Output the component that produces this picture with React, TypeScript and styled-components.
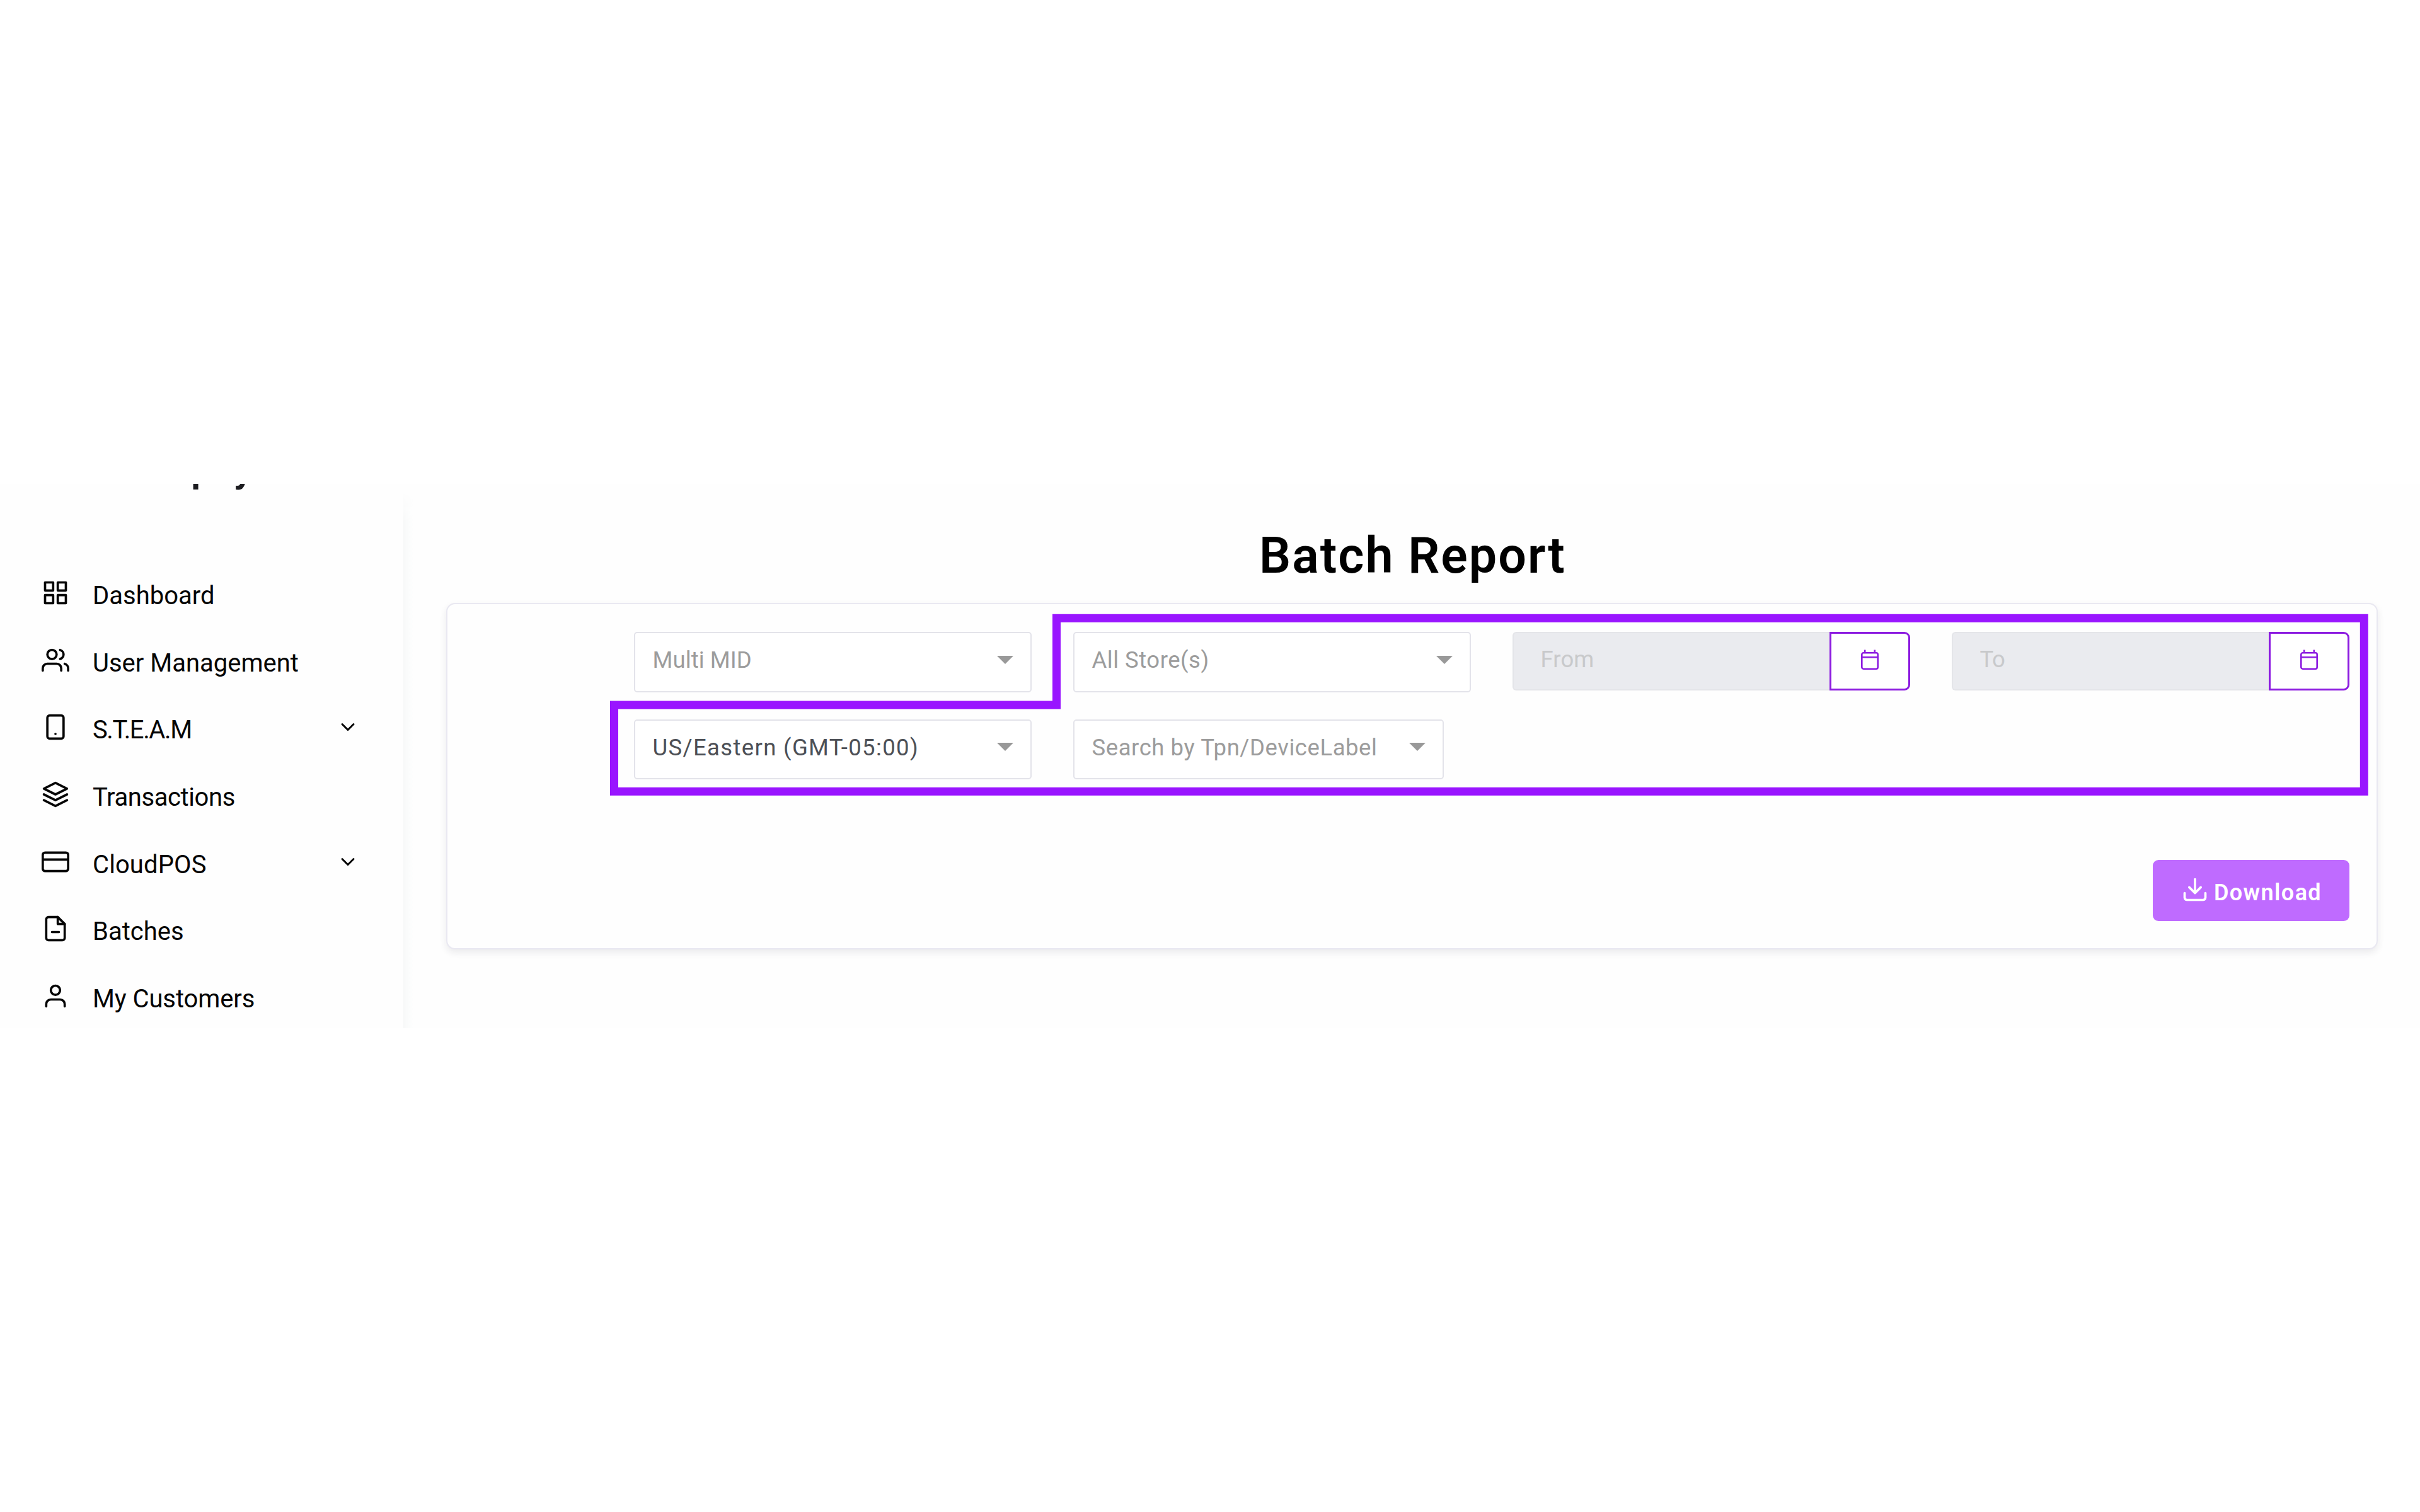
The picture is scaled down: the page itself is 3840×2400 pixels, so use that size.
import React from "react";
import styled, { createGlobalStyle } from "styled-components";
import {
  FiChevronDown,
  FiCreditCard,
  FiDownload,
  FiFileMinus,
  FiGrid,
  FiLayers,
  FiSmartphone,
  FiUser,
  FiUsers,
} from "react-icons/fi";
import type { IconType } from "react-icons";

const GlobalStyle = createGlobalStyle`
  * { box-sizing: border-box; }
  body { margin: 0; background: #fff; font-family: Roboto, "Liberation Sans", sans-serif; }
`;

const Page = styled.div`
  height: 2400px;
  padding: 768px 0;
  background: #fff;
`;

const Shell = styled.div`
  display: flex;
  height: 864px;
  overflow: hidden;
  background: #fefefe;
`;

const Sidebar = styled.aside`
  flex: none;
  width: 640px;
`;

const Brand = styled.div`
  height: 120px;
  padding-left: 303px;
  overflow: hidden;
  color: #1c1c20;
  font-size: 62px;
  font-weight: 600;
  line-height: 72px;
`;

const BrandName = styled.div`
  margin-top: -60px;
`;

const NavItem = styled.a`
  display: flex;
  align-items: center;
  height: 106.6px;
  padding: 0 70px 0 66px;
  color: #050505;
`;

const NavLabel = styled.span<{ $spacing: number }>`
  flex: 1;
  padding: 10px 0 0 37px;
  font-size: 40px;
  line-height: 48px;
  letter-spacing: ${(p) => p.$spacing}px;
  white-space: nowrap;
`;

const Divider = styled.div`
  flex: none;
  width: 16px;
  margin-top: 12px;
  background: linear-gradient(to right, #f7f8f8, #fbfcfc 50%, #fefefe);
  mask-image: linear-gradient(to bottom, transparent, #000 50px);
`;

const Main = styled.main`
  flex: 1;
  padding: 0 67px 0 52px;
`;

const Title = styled.h1`
  height: 189px;
  margin: 0;
  padding: 69px 0 0 2px;
  color: #000;
  font-size: 79px;
  font-weight: 600;
  line-height: 90px;
  letter-spacing: 2px;
  text-align: center;
`;

const Card = styled.section`
  position: relative;
  height: 550px;
  padding: 44px 43px 43px 295.5px;
  border: 2px solid #e9e8f1;
  border-radius: 14px;
  background: #fefefe;
  box-shadow: 0 5px 12px rgba(30, 30, 60, 0.09);
`;

const Filters = styled.div`
  display: grid;
  grid-template-columns: repeat(4, 631.5px);
  grid-template-rows: 95.5px 95.5px;
  justify-content: space-between;
  row-gap: 43px;
`;

const SelectBox = styled.div<{ $width?: number }>`
  display: flex;
  align-items: center;
  justify-content: space-between;
  width: ${(p) => (p.$width ? `${p.$width}px` : "auto")};
  padding: 0 27px 7px 28px;
  border: 2.5px solid #e3e3ea;
  border-radius: 5px;
  background: #fff;
`;

const FieldText = styled.span<{ $color: string; $spacing: number }>`
  padding-top: 2px;
  color: ${(p) => p.$color};
  font-size: 36.5px;
  line-height: 44px;
  letter-spacing: ${(p) => p.$spacing}px;
  white-space: nowrap;
`;

const Caret = styled.i`
  border: solid transparent;
  border-width: 13.5px 13px 0;
  border-top-color: #999;
`;

const DateField = styled.div`
  display: flex;
  height: 93px;
`;

const DateInput = styled.div`
  display: flex;
  flex: 1;
  align-items: center;
  padding: 0 0 7px 43px;
  border: 2px solid #e4e5e9;
  border-right: 0;
  border-radius: 6px 0 0 6px;
  background: #eaebef;
`;

const DateButton = styled.button`
  display: flex;
  align-items: center;
  justify-content: center;
  width: 128px;
  padding: 0 0 5px;
  border: 3px solid #8c1be0;
  border-radius: 0 9px 9px 0;
  background: #fff;
  color: #8c1be0;
`;

const Actions = styled.div`
  display: flex;
  justify-content: flex-end;
  margin-top: 128px;
`;

const DownloadButton = styled.button`
  display: flex;
  align-items: center;
  gap: 8px;
  width: 312px;
  height: 97px;
  padding: 0 0 4px 45px;
  border: 0;
  border-radius: 9px;
  background: #bf6bff;
  color: #fff;
`;

const DownloadLabel = styled.span`
  padding-top: 11px;
  font-family: Roboto, "Liberation Sans", sans-serif;
  font-size: 36px;
  font-weight: 600;
  line-height: 44px;
  letter-spacing: 1.4px;
`;

const Highlight = styled.svg`
  position: absolute;
  top: 0;
  left: 0;
  pointer-events: none;
`;

type NavEntry = { label: string; icon: IconType; spacing: number; expandable?: boolean };

const NAV: NavEntry[] = [
  { label: "Dashboard", icon: FiGrid, spacing: 0 },
  { label: "User Management", icon: FiUsers, spacing: 0 },
  { label: "S.T.E.A.M", icon: FiSmartphone, spacing: -1.4, expandable: true },
  { label: "Transactions", icon: FiLayers, spacing: -0.4 },
  { label: "CloudPOS", icon: FiCreditCard, spacing: 0.1, expandable: true },
  { label: "Batches", icon: FiFileMinus, spacing: 0 },
  { label: "My Customers", icon: FiUser, spacing: -0.1 },
];

const PLACEHOLDER = "#9c9c9c";

function Select({
  text,
  spacing,
  color = PLACEHOLDER,
  width,
}: {
  text: string;
  spacing: number;
  color?: string;
  width?: number;
}) {
  return (
    <SelectBox $width={width}>
      <FieldText $color={color} $spacing={spacing}>{text}</FieldText>
      <Caret />
    </SelectBox>
  );
}

function CalendarIcon() {
  return (
    <svg width="28" height="32" viewBox="0 0 28 32" fill="none" stroke="currentColor" strokeWidth="2.6">
      <rect x="1.3" y="5.3" width="25.4" height="25.4" rx="2.6" />
      <path d="M1.3 12.3H26.7M6.2 0.4V5.3M21.8 0.4V5.3" />
    </svg>
  );
}

function DatePicker({ text, spacing }: { text: string; spacing: number }) {
  return (
    <DateField>
      <DateInput>
        <FieldText $color="#c8c9cb" $spacing={spacing}>{text}</FieldText>
      </DateInput>
      <DateButton aria-label={text}>
        <CalendarIcon />
      </DateButton>
    </DateField>
  );
}

export default function App() {
  return (
    <Page>
      <GlobalStyle />
      <Shell>
        <Sidebar>
          <Brand>
            <BrandName>pay</BrandName>
          </Brand>
          {NAV.map(({ label, icon: Icon, spacing, expandable }) => (
            <NavItem key={label}>
              <Icon size={44} />
              <NavLabel $spacing={spacing}>{label}</NavLabel>
              {expandable && <FiChevronDown size={36} />}
            </NavItem>
          ))}
        </Sidebar>
        <Divider />
        <Main>
          <Title>Batch Report</Title>
          <Card>
            <Filters>
              <Select text="Multi MID" spacing={0.1} />
              <Select text="All Store(s)" spacing={0.5} />
              <DatePicker text="From" spacing={0.1} />
              <DatePicker text="To" spacing={-0.6} />
              <Select text="US/Eastern (GMT-05:00)" spacing={1.35} color="#4d5056" />
              <Select text="Search by Tpn/DeviceLabel" spacing={0.56} width={588} />
            </Filters>
            <Actions>
              <DownloadButton>
                <FiDownload size={44} />
                <DownloadLabel>Download</DownloadLabel>
              </DownloadButton>
            </Actions>
            <Highlight width="3061" height="546" fill="none">
              <path
                d="M966.5 22.2H3041.3V297.3H264.5V160H966.5Z"
                stroke="#9915ff"
                strokeWidth="13"
              />
            </Highlight>
          </Card>
        </Main>
      </Shell>
    </Page>
  );
}
